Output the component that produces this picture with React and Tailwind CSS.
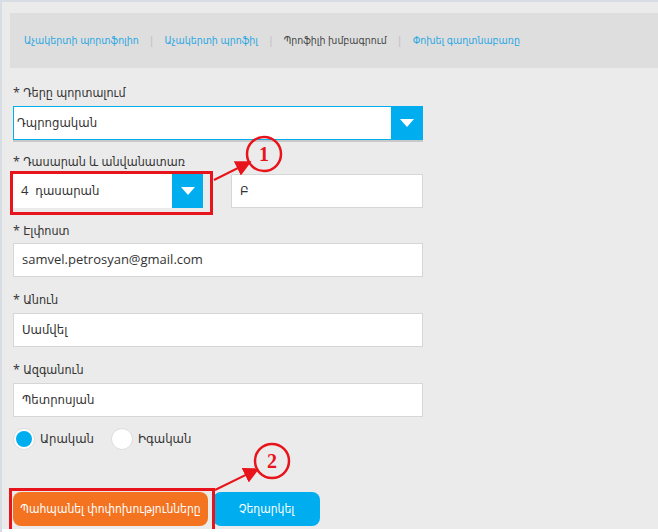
import React from 'react';

const font = { fontFamily: '"Open Sans", "DejaVu Sans Condensed", "DejaVu Sans", sans-serif' };

const Label = ({ children, className = '' }) => (
  <div className={`h-4 text-[12.5px] leading-4 text-[#333] ${className}`}>* {children}</div>
);

const Arrow = () => (
  <div className="w-[31px] h-full bg-[#00aeef] flex items-center justify-center shrink-0">
    <svg width="16" height="10" viewBox="0 0 16 10"><path d="M1 1h14L8 9z" fill="#fff" /></svg>
  </div>
);

const Field = ({ value, className = '' }) => (
  <div className={`h-[34px] bg-white border border-[#d6d6d6] flex items-center px-2 text-[13px] text-[#333] ${className}`}>
    {value}
  </div>
);

const Callout = ({ n, x, y, from }) => (
  <svg className="absolute left-0 top-0 pointer-events-none" width="658" height="532">
    <defs>
      <marker id={`a${n}`} markerWidth="8" markerHeight="8" refX="6" refY="4" orient="auto">
        <path d="M0 0L8 4L0 8z" fill="#e8141c" />
      </marker>
    </defs>
    <line x1={from[0]} y1={from[1]} x2={x - 16} y2={y + 9} stroke="#e8141c" strokeWidth="2" markerEnd={`url(#a${n})`} />
    <circle cx={x} cy={y} r="17" fill="none" stroke="#e8141c" strokeWidth="2.5" />
    <text x={x} y={y + 7} textAnchor="middle" fontFamily="Liberation Serif, serif" fontWeight="bold" fontSize="20" fill="#e8141c">{n}</text>
  </svg>
);

export default function App() {
  return (
    <div className="relative w-[658px] h-[532px] bg-[#ebebeb] border-l-2 border-t-2 border-[#d8dde3] overflow-hidden" style={font}>
      <div className="mt-[11px] ml-[8px] h-[55px] bg-[#dedede] flex items-center pl-[14px] text-[10.5px] whitespace-nowrap">
        <span className="text-[#2aa7e1]">Աչակերտի պորտֆոլիո</span>
        <span className="mx-[10px] text-[#bbb]">|</span>
        <span className="text-[#2aa7e1]">Աչակերտի պրոֆիլ</span>
        <span className="mx-[10px] text-[#bbb]">|</span>
        <span className="text-[#444]">Պրոֆիլի խմբագրում</span>
        <span className="mx-[10px] text-[#bbb]">|</span>
        <span className="text-[#2aa7e1]">Փոխել գաղտնաբառը</span>
      </div>

      <div className="pl-[11px] w-[421px]">
        <Label className="mt-[17px]">Դերը պորտալում</Label>
        <div className="mt-[5px] h-[34px] flex bg-white border border-[#00aeef] shadow-[0_2px_0_#c9c9c9]">
          <div className="flex-1 flex items-center px-[3px] text-[13px] text-[#333]">Դպրոցական</div>
          <Arrow />
        </div>

        <Label className="mt-[14px]">Դասարան և անվանատառ</Label>
        <div className="mt-[4px] flex gap-[28px]">
          <div className="w-[190px] h-[34px] flex bg-white">
            <div className="flex-1 flex items-center px-2 text-[13px] text-[#333]">4&nbsp; դասարան</div>
            <Arrow />
          </div>
          <Field value="Բ" className="flex-1" />
        </div>

        <Label className="mt-[15px]">Էլփոստ</Label>
        <Field value="samvel.petrosyan@gmail.com" className="mt-[4px]" />

        <Label className="mt-[15px]">Անուն</Label>
        <Field value="Սամվել" className="mt-[5px]" />

        <Label className="mt-[15px]">Ազգանուն</Label>
        <Field value="Պետրոսյան" className="mt-[5px] h-[33px]" />

        <div className="mt-[11px] h-[22px] flex items-center text-[13px] text-[#333]">
          <div className="w-[22px] h-[22px] rounded-full bg-white border border-[#ddd] flex items-center justify-center">
            <div className="w-[16px] h-[16px] rounded-full bg-[#00aeef]" />
          </div>
          <span className="ml-[5px]">Արական</span>
          <div className="ml-[17px] w-[22px] h-[22px] rounded-full bg-white border border-[#ddd]" />
          <span className="ml-[5px]">Իգական</span>
        </div>

        <div className="mt-[42px] flex gap-[5px]">
          <button className="w-[195px] h-[34px] rounded-[8px] bg-[#f47321] text-white text-[12px] whitespace-nowrap">Պահպանել փոփոխությունները</button>
          <button className="w-[107px] h-[34px] rounded-[8px] bg-[#00aeef] text-white text-[12px]">Չեղարկել</button>
        </div>
      </div>

      <div className="absolute left-[8px] top-[169px] w-[203px] h-[44px] border-[3px] border-[#e8141c]" />
      <div className="absolute left-[7px] top-[486px] w-[206px] h-[44px] border-[3px] border-[#e8141c]" />
      <Callout n="1" x={262} y={152} from={[212, 178]} />
      <Callout n="2" x={270} y={459} from={[213, 488]} />
      <div className="absolute left-0 bottom-0 w-full h-[3px] bg-white" />
    </div>
  );
}
